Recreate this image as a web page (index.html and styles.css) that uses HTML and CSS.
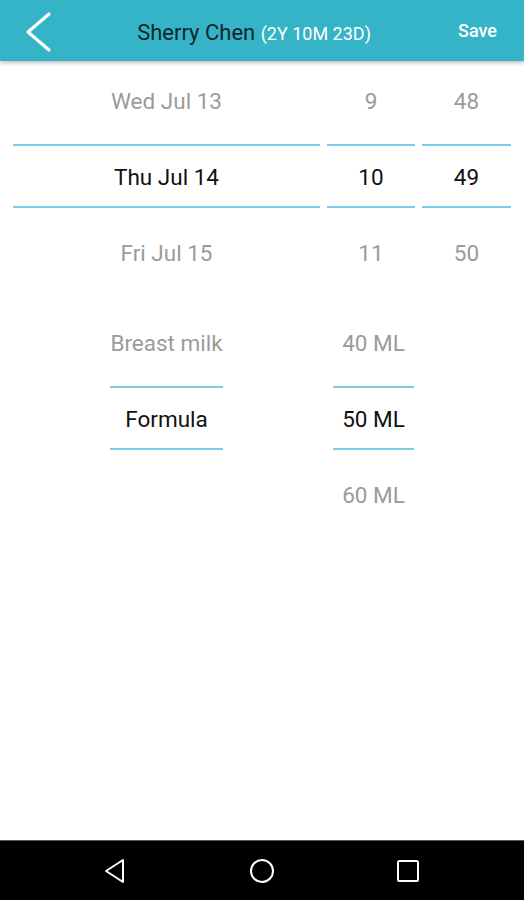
FILE: index.html
```html
<!DOCTYPE html>
<html lang="en">
<head>
    <meta charset="UTF-8">
    <meta name="viewport" content="width=device-width, initial-scale=1.0">
    <title>Feeding</title>
<link rel="stylesheet" href="styles.css">
</head>
<body>
    <div class="screen">
        <div class="topbar">
            <svg class="back" width="30" height="44" viewBox="0 0 30 44">
                <polyline points="25,4 4,22 25,40" fill="none" stroke="#fff" stroke-width="3.2" stroke-linecap="round" stroke-linejoin="round"/>
            </svg>
            <div class="title">Sherry Chen <span class="age">(2Y 10M 23D)</span></div>
            <div class="save">Save</div>
        </div>

        <div class="content">
            <!-- date / hour / minute -->
            <div class="picker picker-time">
                <div class="col col-date">
                    <div class="item">Wed Jul 13</div>
                    <div class="item sel">Thu Jul 14</div>
                    <div class="item">Fri Jul 15</div>
                </div>
                <div class="col col-hour">
                    <div class="item">9</div>
                    <div class="item sel">10</div>
                    <div class="item">11</div>
                </div>
                <div class="col col-min">
                    <div class="item">48</div>
                    <div class="item sel">49</div>
                    <div class="item">50</div>
                </div>
            </div>

            <!-- type / amount -->
            <div class="picker picker-amount">
                <div class="col col-type">
                    <div class="item">Breast milk</div>
                    <div class="item sel">Formula</div>
                    <div class="item"></div>
                </div>
                <div class="col col-ml">
                    <div class="item">40 ML</div>
                    <div class="item sel">50 ML</div>
                    <div class="item">60 ML</div>
                </div>
            </div>
        </div>

        <div class="navbar">
            <svg width="24" height="26" viewBox="0 0 24 26">
                <polygon points="20,2 20,24 3,13" fill="none" stroke="#fff" stroke-width="2" stroke-linejoin="round"/>
            </svg>
            <svg width="26" height="26" viewBox="0 0 26 26">
                <circle cx="13" cy="13" r="11" fill="none" stroke="#fff" stroke-width="2"/>
            </svg>
            <svg width="24" height="24" viewBox="0 0 24 24">
                <rect x="2" y="2" width="20" height="20" rx="1.5" fill="none" stroke="#fff" stroke-width="2"/>
            </svg>
        </div>
    </div>
</body>
</html>
```

FILE: styles.css
```css
body {
margin: 0;
font-family: Roboto, "Noto Sans", Arial, sans-serif;
background-color: #fff;
}

.screen {
width: 524px;
height: 900px;
display: flex;
flex-direction: column;
}

.topbar {
height: 61px;
background-color: #35b3c7;
box-shadow: 0 2px 4px rgba(0,0,0,0.25);
display: flex;
align-items: center;
padding: 0 27px 0 24px;
position: relative;
z-index: 1;
}

.back {
display: block;
margin-top: 2px;
}

.title {
flex: 1;
text-align: center;
font-size: 22px;
color: #10262b;
padding-right: 4px;
margin-top: 3px;
}

.age {
font-size: 18px;
color: #fff;
}

.save {
font-size: 18px;
color: #fff;
font-weight: 500;
margin-bottom: 1px;
}

.content {
flex: 1;
}

.picker {
display: flex;
}

.picker-time {
padding: 7px 13px 0 13px;
gap: 7px;
}

.picker-amount {
padding: 26px 0 0 110px;
gap: 110px;
}

.col {
display: flex;
flex-direction: column;
gap: 12px;
}

.col-date { width: 307px; }
.col-hour { width: 88px; }
.col-min { width: 89px; }
.col-type { width: 113px; }
.col-ml { width: 81px; }

.item {
height: 64px;
display: flex;
align-items: center;
justify-content: center;
font-size: 22.5px;
color: #9b9b9b;
box-sizing: border-box;
padding-top: 1px;
}

.item.sel {
color: #111;
border-top: 2px solid #80cbe8;
border-bottom: 2px solid #80cbe8;
}

.navbar {
height: 59px;
background-color: #000;
border-top: 1px solid #5a5a5a;
display: flex;
align-items: center;
justify-content: space-between;
padding: 0 104px 0 103px;
}
```
